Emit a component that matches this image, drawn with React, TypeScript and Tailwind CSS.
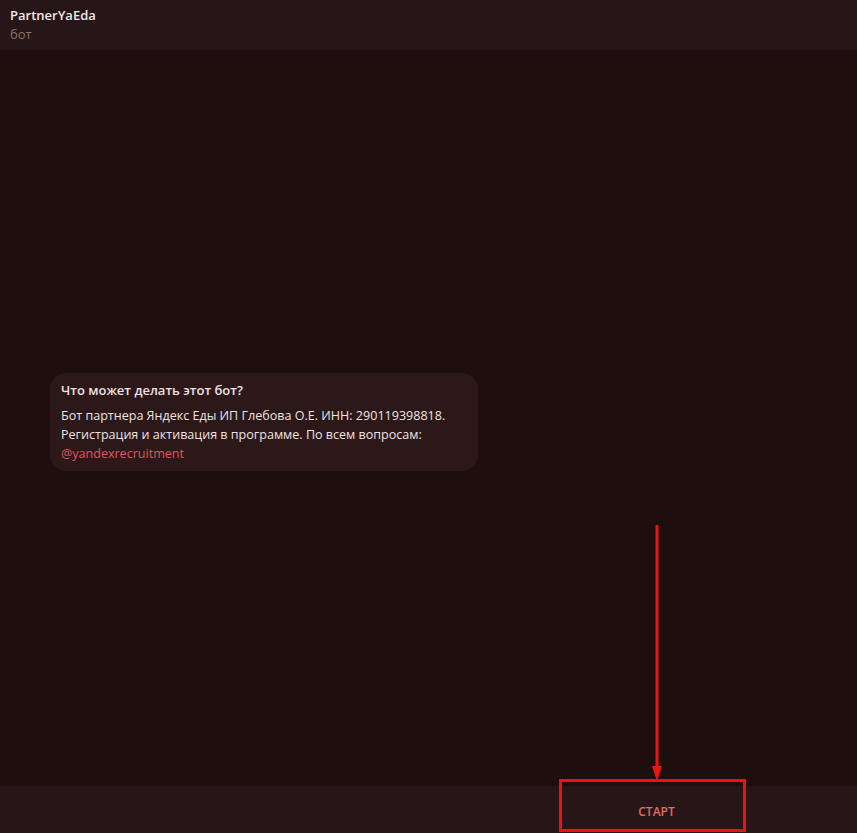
export default function App() {
  return (
    <div className="relative flex h-[833px] w-[857px] flex-col overflow-hidden bg-[#1e0e0e] font-['Open_Sans','Noto_Sans',sans-serif] text-[13px]">
      {/* шапка чата */}
      <div className="flex h-[50px] shrink-0 flex-col justify-center bg-[#261617] pl-[10px]">
        <span className="font-semibold leading-[18px] text-[#f2e9e9]">PartnerYaEda</span>
        <span className="leading-[20px] text-[#8a6f70]">бот</span>
      </div>

      {/* область сообщений */}
      <div className="flex flex-1 flex-col pl-[50px] pt-[323px]">
        <div className="w-[428px] rounded-[16px] bg-[#2c1719] px-[11px] pb-[8px] pt-[8px] text-[#ece3e3]">
          <div className="mb-[7px] font-semibold leading-[18px]">Что может делать этот бот?</div>
          <div className="text-[12.55px] leading-[19px]">
            Бот партнера Яндекс Еды ИП Глебова О.Е. ИНН: 290119398818.
            <br />
            Регистрация и активация в программе. По всем вопросам:
            <br />
            <span className="text-[#e0565e]">@yandexrecruitment</span>
          </div>
        </div>
      </div>

      {/* нижняя панель */}
      <div className="flex h-[47px] shrink-0 items-center justify-center bg-[#271518] pl-[456px] pt-[4px]">
        <span className="text-[12px] font-semibold text-[#e06c6c]">СТАРТ</span>
      </div>

      {/* красная пометка: стрелка и рамка */}
      <svg className="absolute left-[647px] top-[522px]" width="20" height="262" viewBox="0 0 20 262">
        <line x1="10" y1="3" x2="10" y2="248" stroke="#ec1212" strokeWidth="3" />
        <polygon points="5,244 15,244 10,259" fill="#ec1212" />
      </svg>
      <div className="absolute left-[559px] top-[779px] h-[53px] w-[187px] border-[3px] border-[#ec1212]" />
    </div>
  );
}
